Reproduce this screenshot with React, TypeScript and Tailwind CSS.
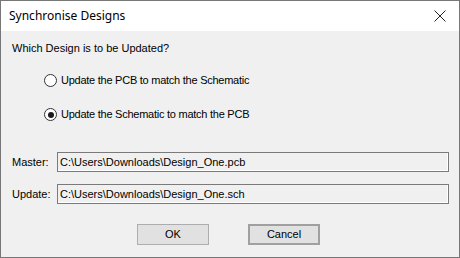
const sans = "font-['Liberation_Sans',Arial,sans-serif]"

function Radio({ checked, label }: { checked?: boolean; label: string }) {
  return (
    <div className="flex items-center h-[13px] pl-[43px]">
      <span className="w-[13px] h-[13px] rounded-full border border-[#333333] bg-white flex items-center justify-center shrink-0">
        {checked && <span className="w-[6px] h-[6px] rounded-full bg-[#1a1a1a]" />}
      </span>
      <span className="ml-[4px] leading-[13px] tracking-[-0.25px]">{label}</span>
    </div>
  )
}

function PathField({ label, value }: { label: string; value: string }) {
  return (
    <div className="flex items-center pl-[11px] pr-[10px]">
      <span className="w-[45px] leading-[13px]">{label}</span>
      <div className="flex-1 h-[20px] border border-[#7a7a7a] shadow-[inset_-1px_-1px_0_#ffffff] bg-[#f0f0f0] flex items-center pl-[2px] leading-[13px]">
        {value}
      </div>
    </div>
  )
}

export default function App() {
  return (
    <div className="w-[460px] h-[258px] border border-[#777777] bg-[#f0f0f0] flex flex-col text-black">
      <div className="h-[30px] bg-white flex items-center justify-between pl-[8px] pr-[13px] shrink-0">
        <span className="font-['Noto_Sans',sans-serif] text-[12px]">Synchronise Designs</span>
        <svg width="12" height="12" viewBox="0 0 12 12">
          <path d="M0.5 0.5 L11.5 11.5 M11.5 0.5 L0.5 11.5" stroke="#222" strokeWidth="1" />
        </svg>
      </div>

      <div className={`flex flex-col text-[11px] ${sans}`}>
        <p className="mt-[11px] pl-[11px] leading-[13px]">Which Design is to be Updated?</p>
        <div className="mt-[19px]">
          <Radio label="Update the PCB to match the Schematic" />
        </div>
        <div className="mt-[21px]">
          <Radio checked label="Update the Schematic to match the PCB" />
        </div>
        <div className="mt-[31px]">
          <PathField label="Master:" value="C:\Users\Downloads\Design_One.pcb" />
        </div>
        <div className="mt-[12px]">
          <PathField label="Update:" value="C:\Users\Downloads\Design_One.sch" />
        </div>
        <div className="mt-[20px] flex pl-[136px] gap-[39px]">
          <button className="w-[72px] h-[21px] bg-[#e1e1e1] border border-[#adadad] leading-[13px]">OK</button>
          <button className="w-[72px] h-[21px] bg-[#e1e1e1] border-2 border-[#a0a0a0] leading-[13px]">Cancel</button>
        </div>
      </div>
    </div>
  )
}
